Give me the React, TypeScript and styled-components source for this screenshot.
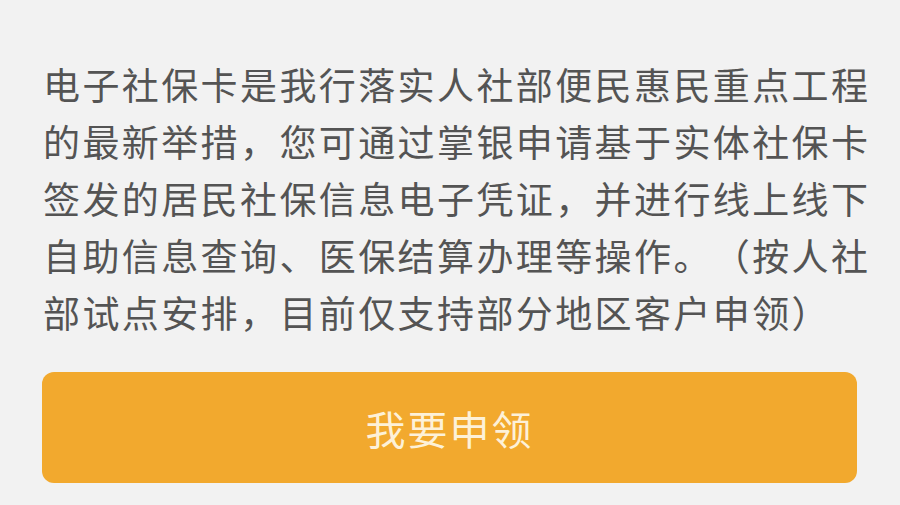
import styled, { createGlobalStyle } from 'styled-components';

const GlobalStyle = createGlobalStyle`
  html, body {
    margin: 0;
    padding: 0;
    background: #f2f2f2;
  }
  body {
    font-family: "Noto Sans CJK SC", "Noto Sans", sans-serif;
  }
`;

const Page = styled.div`
  width: 900px;
  height: 505px;
  box-sizing: border-box;
  padding: 56px 0 0 42px;
  background: #f2f2f2;
  overflow: hidden;
`;

const Intro = styled.p`
  margin: 0 0 31px 1px;
  width: 840px;
  font-size: 37px;
  line-height: 57px;
  letter-spacing: 2.4px;
  color: #545454;
  text-spacing-trim: space-all;
`;

const ApplyButton = styled.button`
  display: flex;
  align-items: center;
  justify-content: center;
  width: 815px;
  height: 111px;
  padding: 0;
  border: none;
  border-radius: 12px;
  background: #f2a92e;
  color: #fdf1d8;
  font-family: "Noto Sans CJK SC", sans-serif;
  font-size: 40px;
  letter-spacing: 2px;
  cursor: pointer;
`;

export default function App() {
  return (
    <>
      <GlobalStyle />
      <Page>
        <Intro>
          电子社保卡是我行落实人社部便民惠民重点工程的最新举措，您可通过掌银申请基于实体社保卡签发的居民社保信息电子凭证，并进行线上线下自助信息查询、医保结算办理等操作。（按人社部试点安排，目前仅支持部分地区客户申领）
        </Intro>
        <ApplyButton>我要申领</ApplyButton>
      </Page>
    </>
  );
}
